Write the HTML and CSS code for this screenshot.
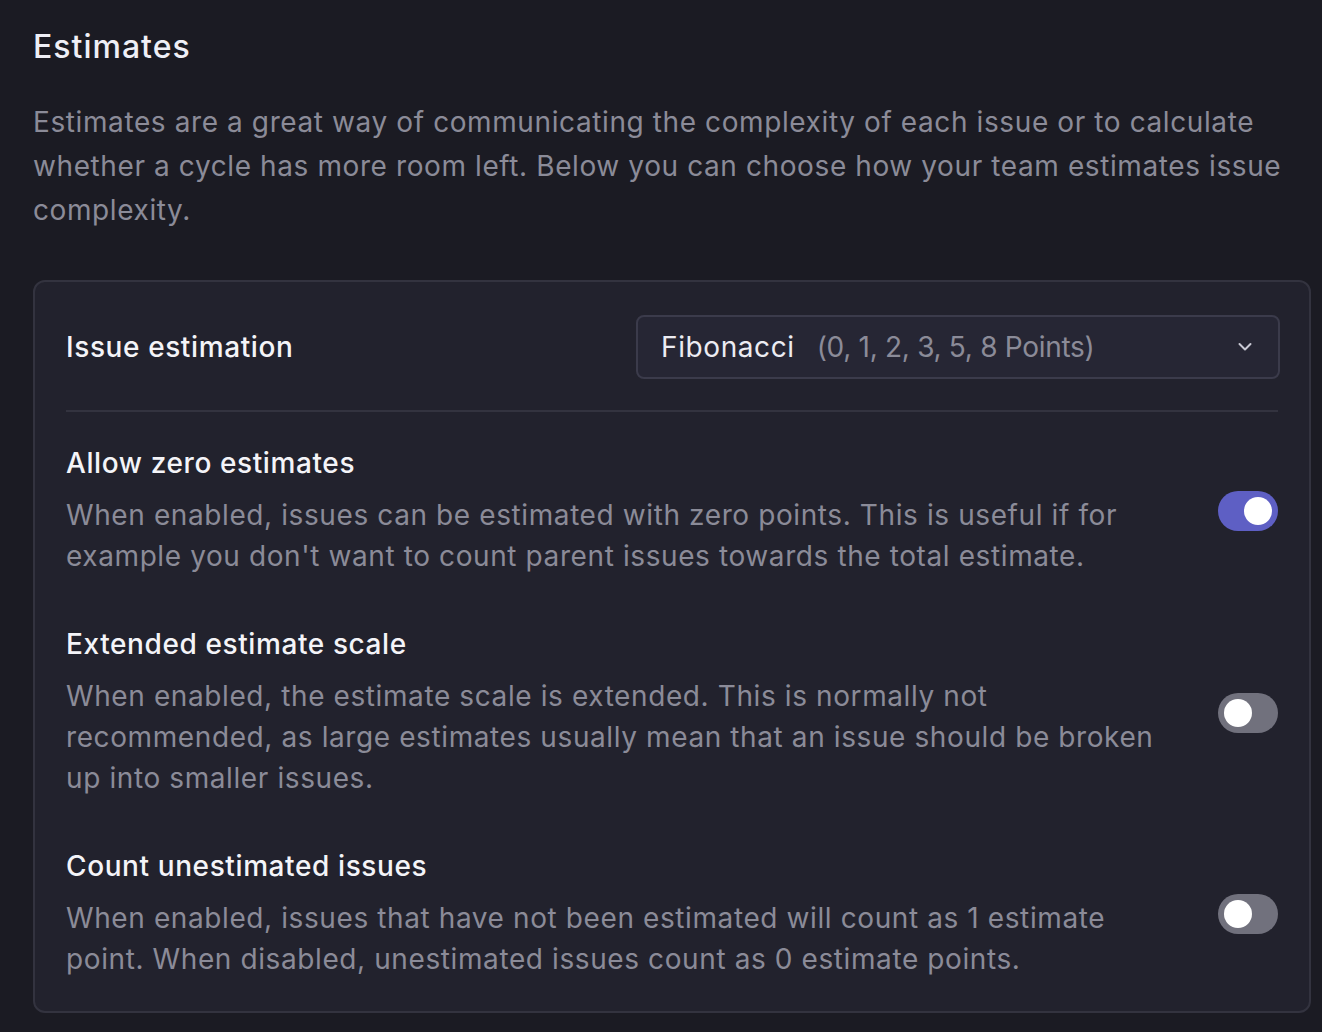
FILE: index.html
```html
<!DOCTYPE html>
<html>
<head>
<meta charset="utf-8">
<link rel="stylesheet" href="styles.css">
</head>
<body>
<div class="page">
  <h1 class="title">Estimates</h1>
  <p class="intro">Estimates are a great way of communicating the complexity of each issue or to calculate whether a cycle has more room left. Below you can choose how your team estimates issue complexity.</p>
  <div class="card">
    <div class="row-select">
      <div class="label">Issue estimation</div>
      <div class="select">
        <span class="sel-main">Fibonacci</span>
        <span class="sel-sub">(0, 1, 2, 3, 5, 8 Points)</span>
        <svg class="chev" width="14" height="10" viewBox="0 0 14 10"><path d="M1.5 2 L7 7.5 L12.5 2" fill="none" stroke="#c9c9d4" stroke-width="2" stroke-linecap="round" stroke-linejoin="round"/></svg>
      </div>
    </div>
    <div class="sep"></div>
    <div class="settings">
      <div class="setting">
        <div class="text">
          <div class="s-title">Allow zero estimates</div>
          <div class="s-desc">When enabled, issues can be estimated with zero points. This is useful if for example you don't want to count parent issues towards the total estimate.</div>
        </div>
        <div class="toggle on"><div class="knob"></div></div>
      </div>
      <div class="setting">
        <div class="text">
          <div class="s-title">Extended estimate scale</div>
          <div class="s-desc">When enabled, the estimate scale is extended. This is normally not recommended, as large estimates usually mean that an issue should be broken up into smaller issues.</div>
        </div>
        <div class="toggle"><div class="knob"></div></div>
      </div>
      <div class="setting">
        <div class="text">
          <div class="s-title">Count unestimated issues</div>
          <div class="s-desc">When enabled, issues that have not been estimated will count as 1 estimate point. When disabled, unestimated issues count as 0 estimate points.</div>
        </div>
        <div class="toggle"><div class="knob"></div></div>
      </div>
    </div>
  </div>
</div>
</body>
</html>
```
FILE: styles.css
```css
html, body {
  margin: 0;
  padding: 0;
  background: #1b1b23;
}
body {
  font-family: Inter, "Noto Sans", sans-serif;
  width: 1322px;
  height: 1032px;
  overflow: hidden;
}
.page {
  padding: 26px 11px 0 33px;
}
.title {
  margin: 0;
  font-size: 32px;
  font-weight: 500;
  letter-spacing: 1px;
  color: #efeff6;
  line-height: 42px;
}
.intro {
  margin: 32px 22px 0 0;
  font-size: 28px;
  letter-spacing: 0.6px;
  line-height: 44px;
  color: #8b8b98;
  font-weight: 400;
}
.card {
  margin-top: 48px;
  border: 2px solid #33333f;
  border-radius: 12px;
  background: #22222d;
  padding: 0 31px 31px 31px;
}
.row-select {
  display: flex;
  align-items: center;
  justify-content: space-between;
  height: 128px;
  padding-top: 1px;
  box-sizing: border-box;
}
.label {
  font-size: 28px;
  letter-spacing: 0.6px;
  font-weight: 500;
  color: #f4f4f8;
}
.select {
  width: 644px;
  height: 64px;
  margin-right: -2px;
  box-sizing: border-box;
  border: 2px solid #3b3b4b;
  border-radius: 8px;
  background: #262634;
  display: flex;
  align-items: center;
  padding: 0 26px 0 23px;
}
.sel-main {
  font-size: 28px;
  letter-spacing: 0.6px;
  color: #ececf2;
}
.sel-sub {
  font-size: 28px;
  letter-spacing: -0.3px;
  color: #8b8b98;
  margin-left: 22px;
  flex: 1;
}
.chev {
  display: block;
}
.sep {
  height: 2px;
  background: #33333f;
}
.settings {
  display: flex;
  flex-direction: column;
  gap: 49px;
  margin-top: 33px;
}
.setting {
  display: flex;
  align-items: center;
  gap: 56px;
}
.text {
  flex: 1;
}
.s-title {
  font-size: 28px;
  letter-spacing: 0.6px;
  font-weight: 500;
  color: #f4f4f8;
  line-height: 36px;
}
.s-desc {
  margin-top: 14px;
  font-size: 28px;
  letter-spacing: 0.6px;
  line-height: 41px;
  color: #8b8b98;
}
.toggle {
  width: 60px;
  height: 40px;
  border-radius: 20px;
  background: #71717d;
  display: flex;
  align-items: center;
  padding: 0 6px;
  box-sizing: border-box;
  flex-shrink: 0;
}
.toggle.on {
  background: #5e5fc4;
  justify-content: flex-end;
}
.knob {
  width: 28px;
  height: 28px;
  border-radius: 50%;
  background: #ffffff;
}
```
